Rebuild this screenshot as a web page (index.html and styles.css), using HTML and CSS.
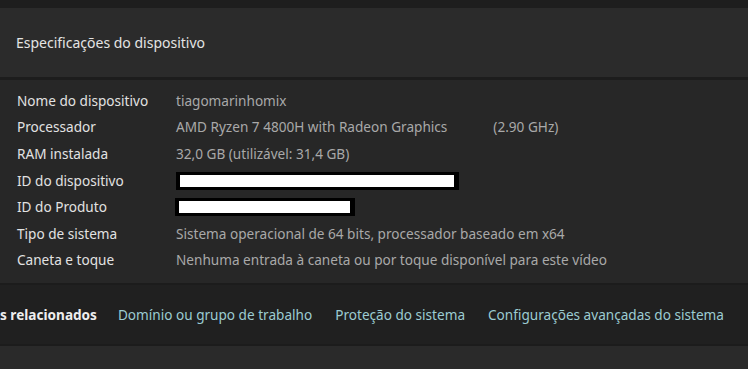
FILE: index.html
```html
<!DOCTYPE html>
<html lang="pt">
<head>
<meta charset="utf-8">
<title>Especificações do dispositivo</title>
<link rel="stylesheet" href="styles.css">
</head>
<body>
<div class="topbar"></div>
<div class="header"><h1 class="title">Especificações do dispositivo</h1></div>
<div class="sep"></div>
<div class="specs">
  <div class="row"><span class="label">Nome do dispositivo</span><span class="value">tiagomarinhomix</span></div>
  <div class="row"><span class="label">Processador</span><span class="value">AMD Ryzen 7 4800H with Radeon Graphics<span class="freq">(2.90 GHz)</span></span></div>
  <div class="row"><span class="label">RAM instalada</span><span class="value">32,0 GB (utilizável: 31,4 GB)</span></div>
  <div class="row"><span class="label">ID do dispositivo</span><span class="value"><span class="redact redact-long"></span></span></div>
  <div class="row"><span class="label">ID do Produto</span><span class="value"><span class="redact redact-short"></span></span></div>
  <div class="row"><span class="label">Tipo de sistema</span><span class="value">Sistema operacional de 64 bits, processador baseado em x64</span></div>
  <div class="row"><span class="label">Caneta e toque</span><span class="value">Nenhuma entrada à caneta ou por toque disponível para este vídeo</span></div>
</div>
<div class="sep2"></div>
<div class="related">
  <span class="rel-title">s relacionados</span>
  <a class="link" href="#">Domínio ou grupo de trabalho</a>
  <a class="link" href="#">Proteção do sistema</a>
  <a class="link" href="#">Configurações avançadas do sistema</a>
</div>
<div class="sep3"></div>
<div class="bottom"></div>
</body>
</html>
```
FILE: styles.css
```css
html, body {
  margin: 0;
  padding: 0;
  background: #272727;
  font-family: "Noto Sans", "Open Sans", sans-serif;
  font-size: 13.6px;
  color: #dcdcdc;
  overflow: hidden;
  height: 369px;
}
.topbar {
  height: 8px;
  background: #1e1e1e;
}
.header {
  height: 69px;
  background: #2b2b2b;
  display: flex;
  align-items: center;
  padding-left: 16px;
}
.title {
  margin: 0;
  font-size: 14px;
  font-weight: 400;
  color: #e4e4e4;
}
.sep {
  height: 3px;
  background: #1d1d1d;
}
.specs {
  padding-top: 7px;
  height: 196px;
  padding-left: 17px;
}
.row {
  display: flex;
  height: 26.6px;
  align-items: center;
}
.label {
  width: 159px;
  flex: none;
  color: #e2e2e2;
}
.value {
  color: #a9a9a9;
  display: flex;
  align-items: center;
}
.freq {
  margin-left: 46px;
}
.redact {
  display: block;
  background: #fff;
  border: 4px solid #000;
  border-width: 3px 5px 3px 4px;
  height: 12px;
}
.redact-long {
  width: 274px;
  margin-top: 1px;
}
.redact-short {
  width: 171px;
  margin-left: -1px;
  margin-top: 1px;
}
.sep2 {
  height: 2px;
  background: #1c1c1c;
}
.related {
  height: 59px;
  background: #202020;
  display: flex;
  align-items: center;
  gap: 23px;
}
.rel-title {
  font-weight: 700;
  color: #eeeeee;
  margin-right: -2px;
  margin-left: 0;
}
.link {
  color: #9cccd2;
  text-decoration: none;
}
.sep3 {
  height: 2px;
  background: #1c1c1c;
}
.bottom {
  height: 40px;
  background: #2a2a2a;
}
```
